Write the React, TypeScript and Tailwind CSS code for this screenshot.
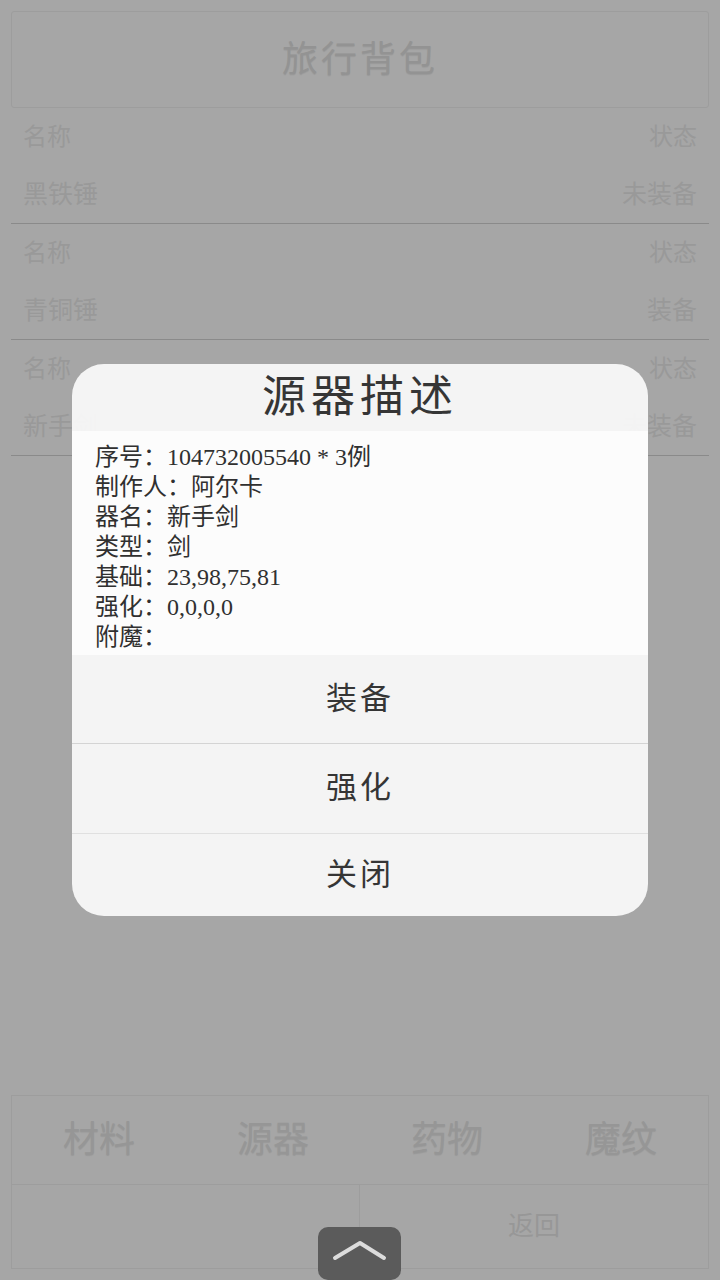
import React from "react";

const FONT = { fontFamily: '"Liberation Serif", "Noto Sans CJK SC", serif' };

const items = [
  { name: "黑铁锤", state: "未装备" },
  { name: "青铜锤", state: "装备" },
  { name: "新手剑", state: "未装备" },
];

const details = [
  ["序号：", "104732005540 * 3例"],
  ["制作人：", "阿尔卡"],
  ["器名：", "新手剑"],
  ["类型：", "剑"],
  ["基础：", "23,98,75,81"],
  ["强化：", "0,0,0,0"],
  ["附魔：", ""],
];

export default function App() {
  return (
    <div
      className="relative w-[720px] h-[1280px] overflow-hidden bg-[#a6a6a6] flex flex-col px-[11px] pt-[11px]"
      style={FONT}
    >
      {/* header */}
      <div className="h-[97px] shrink-0 border border-[#9d9d9d] rounded-[3px] flex items-center justify-center text-[36px] tracking-[3px] text-[#939393] [text-shadow:0_1px_1px_rgba(0,0,0,0.08)]">
        旅行背包
      </div>

      {/* list */}
      {items.map((it) => (
        <div key={it.name} className="h-[116px] shrink-0 border-b border-[#8a8a8a] flex flex-col px-[12px] text-[#999999]">
          <div className="h-[58px] flex items-center justify-between text-[24px]">
            <span>名称</span>
            <span>状态</span>
          </div>
          <div className="h-[57px] flex items-center justify-between text-[25px]">
            <span>{it.name}</span>
            <span>{it.state}</span>
          </div>
        </div>
      ))}

      <div className="flex-1" />

      {/* tabs */}
      <div className="h-[89px] shrink-0 border border-b-0 border-[#9d9d9d] grid grid-cols-4 items-center text-[36px] text-[#969696] [text-shadow:0_1px_1px_rgba(0,0,0,0.08)]">
        <span className="text-center">材料</span>
        <span className="text-center">源器</span>
        <span className="text-center">药物</span>
        <span className="text-center">魔纹</span>
      </div>
      <div className="h-[85px] shrink-0 border border-[#9d9d9d] grid grid-cols-2">
        <div className="border-r border-[#9d9d9d]" />
        <div className="flex items-center justify-center text-[26px] text-[#979797]">返回</div>
      </div>
      <div className="h-[11px] shrink-0" />

      {/* modal */}
      <div className="absolute left-[72px] top-[364px] w-[576px] h-[552px] rounded-[32px] overflow-hidden flex flex-col opacity-[0.975]">
        <div className="h-[67px] shrink-0 bg-[#f6f6f6] flex items-center justify-center text-[44px] tracking-[5px] text-[#333333]">
          源器描述
        </div>
        <div className="h-[224px] shrink-0 bg-white px-[23px] pt-[11px] flex flex-col text-[24px] leading-[30px] text-[#2e2e2e]">
          {details.map(([k, v]) => (
            <div key={k} className="flex whitespace-nowrap">
              <span>{k}</span>
              <span>{v}</span>
            </div>
          ))}
        </div>
        <div className="h-[89px] shrink-0 bg-[#f6f6f6] flex items-center justify-center text-[31px] tracking-[3px] text-[#333333] border-b border-[#d6d6d6]">
          装备
        </div>
        <div className="h-[90px] shrink-0 bg-[#f6f6f6] flex items-center justify-center text-[31px] tracking-[3px] text-[#333333] border-b border-[#e2e2e2]">
          强化
        </div>
        <div className="flex-1 bg-[#f6f6f6] flex items-center justify-center text-[31px] tracking-[3px] text-[#333333]">
          关闭
        </div>
      </div>

      {/* floating up button */}
      <div className="absolute left-[318px] top-[1227px] w-[83px] h-[53px] rounded-[10px] bg-[#5b5b5b] flex items-center justify-center">
        <svg width="83" height="53" viewBox="0 0 83 53">
          <path d="M17 31 L42 16 L66 31" fill="none" stroke="#dcdcdc" strokeWidth="4" strokeLinecap="round" strokeLinejoin="round" />
        </svg>
      </div>
    </div>
  );
}
